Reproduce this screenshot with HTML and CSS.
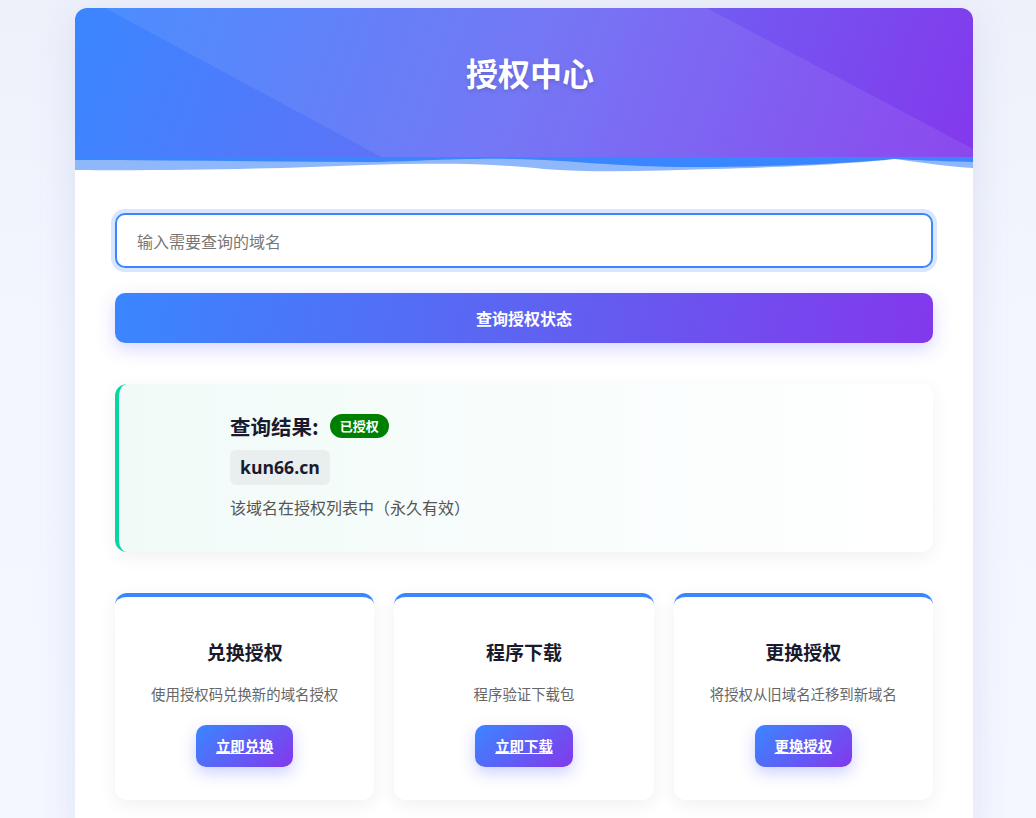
FILE: index.html
```html
<!DOCTYPE html>
<html lang="zh-CN">
<head>
<meta charset="utf-8">
<title>授权中心</title>
<link rel="stylesheet" href="styles.css">
</head>
<body>
<div class="container">
  <header class="header">
    <svg class="header-band" viewBox="0 0 900 160" preserveAspectRatio="none" aria-hidden="true">
      <polygon points="30,0 633,0 900,150 900,160 309,160" fill="rgba(255,255,255,0.08)"/>
    </svg>
    <h1 class="title">授权中心</h1>
    <svg class="wave" viewBox="0 0 900 16" preserveAspectRatio="none" aria-hidden="true">
      <rect x="0" y="0" width="900" height="16" fill="#8fb7fb"/>
      <path d="M0 0 H900 V5 C860 4 840 3 822 2 C780 6 700 10 620 10 C540 10 500 3 440 2 C380 1 330 5 300 5 C200 5 100 3 0 3 Z" fill="#3a86ff"/>
      <path d="M0 13 C80 14 200 12 290 8 C360 6 420 6 470 12 C520 16 580 14 640 12 C720 10 790 6 822 2 C850 6 880 10 900 11 V16 H0 Z" fill="#ffffff"/>
    </svg>
  </header>

  <main class="content">
    <input class="domain-input" type="text" placeholder="输入需要查询的域名">
    <button class="query-btn" type="button">查询授权状态</button>

    <section class="result">
      <div class="result-head">
        <h2 class="result-title">查询结果:</h2>
        <span class="badge">已授权</span>
      </div>
      <div class="domain">kun66.cn</div>
      <p class="result-desc">该域名在授权列表中（永久有效）</p>
    </section>

    <section class="cards">
      <div class="card">
        <h3 class="card-title">兑换授权</h3>
        <p class="card-desc">使用授权码兑换新的域名授权</p>
        <a class="card-btn" href="#">立即兑换</a>
      </div>
      <div class="card">
        <h3 class="card-title">程序下载</h3>
        <p class="card-desc">程序验证下载包</p>
        <a class="card-btn" href="#">立即下载</a>
      </div>
      <div class="card">
        <h3 class="card-title">更换授权</h3>
        <p class="card-desc">将授权从旧域名迁移到新域名</p>
        <a class="card-btn" href="#">更换授权</a>
      </div>
    </section>
  </main>
</div>
</body>
</html>
```

FILE: styles.css
```css
* { box-sizing: border-box; }

html, body { height: 100%; }

body {
  margin: 0;
  padding: 8px 63px 0 75px;
  background: linear-gradient(180deg, #eef1fa 0%, #f4f6ff 40%, #f5f7ff 100%);
  font-family: "Noto Sans CJK SC", "Noto Sans", sans-serif;
  color: #1a1a2e;
}

.container {
  max-width: 898px;
  margin: 0 auto;
  background: #ffffff;
  border-radius: 12px;
  overflow: hidden;
  box-shadow: 0 10px 40px rgba(60, 80, 170, 0.12);
  min-height: 830px;
}

.header {
  position: relative;
  background: linear-gradient(110deg, #3a86ff 0%, #6a6cf5 50%, #8338ec 100%);
  padding-top: 40px;
  text-align: center;
}

.header-band {
  position: absolute;
  left: 0;
  top: 0;
  width: 100%;
  height: 150px;
}

.title {
  position: relative;
  margin: 0;
  padding-left: 12px;
  font-size: 32px;
  line-height: 48px;
  font-weight: 700;
  color: #ffffff;
  text-shadow: 0 2px 4px rgba(0, 0, 0, 0.15);
}

.wave {
  display: block;
  width: 100%;
  height: 16px;
  margin-top: 61px;
  position: relative;
}

.content {
  padding: 40px 40px 40px;
}

.domain-input {
  display: block;
  width: 100%;
  height: 55px;
  padding: 0 20px;
  border: 2px solid #3a86ff;
  border-radius: 10px;
  box-shadow: 0 0 0 4px rgba(58, 134, 255, 0.2);
  font-family: inherit;
  font-size: 16px;
  color: #333;
  outline: none;
  background: #fff;
}

.domain-input::placeholder { color: #777; }

.query-btn {
  display: block;
  width: 100%;
  height: 50px;
  margin-top: 25px;
  border: 0;
  border-radius: 10px;
  background: linear-gradient(100deg, #3a86ff 0%, #5e63f2 50%, #8338ec 100%);
  color: #fff;
  font-family: inherit;
  font-size: 16px;
  font-weight: 700;
  box-shadow: 0 6px 18px rgba(90, 100, 255, 0.25);
  cursor: pointer;
}

.result {
  margin-top: 41px;
  border-left: 4px solid #06d6a0;
  border-radius: 12px;
  background: linear-gradient(90deg, #f0fbf8 0%, #f8fdfc 50%, #ffffff 100%);
  box-shadow: 0 5px 20px rgba(0, 0, 0, 0.06);
  padding: 27px 30px 30px 111px;
  height: 168px;
}

.result-head {
  display: flex;
  align-items: center;
  gap: 11px;
}

.result-title {
  margin: 0;
  font-size: 20.5px;
  line-height: 30px;
  font-weight: 700;
  color: #1a1a2e;
}

.badge {
  display: inline-block;
  height: 24px;
  line-height: 24px;
  padding: 0 10px;
  border-radius: 12px;
  background: #008000;
  color: #fff;
  font-size: 13px;
  font-weight: 700;
}

.domain {
  display: inline-block;
  margin-top: 9px;
  height: 35px;
  line-height: 35px;
  padding: 0 10px;
  border-radius: 6px;
  background: #e9eeee;
  font-family: "Open Sans", "Noto Sans", sans-serif;
  font-size: 17.6px;
  font-weight: 700;
  color: #1a1a2e;
}

.result-desc {
  margin: 10px 0 0;
  font-size: 16px;
  line-height: 24px;
  color: #555;
}

.cards {
  margin-top: 41px;
  display: grid;
  grid-template-columns: repeat(3, 1fr);
  gap: 20px;
}

.card {
  border-top: 4px solid #3a86ff;
  border-radius: 12px;
  background: #fff;
  box-shadow: 0 5px 20px rgba(0, 0, 0, 0.06);
  padding: 40px 15px 33px;
  text-align: center;
}

.card-title {
  margin: 0;
  font-size: 19px;
  line-height: 30px;
  font-weight: 700;
  color: #1a1a2e;
}

.card-desc {
  margin: 16px 0 0;
  font-size: 14.4px;
  line-height: 22px;
  color: #666;
}

.card-btn {
  display: inline-block;
  margin-top: 20px;
  height: 42px;
  line-height: 42px;
  padding: 0 20px;
  border-radius: 10px;
  background: linear-gradient(135deg, #3a86ff 0%, #8338ec 100%);
  color: #fff;
  font-size: 14.4px;
  font-weight: 700;
  text-decoration: underline;
  box-shadow: 0 6px 16px rgba(90, 100, 255, 0.3);
}
```
